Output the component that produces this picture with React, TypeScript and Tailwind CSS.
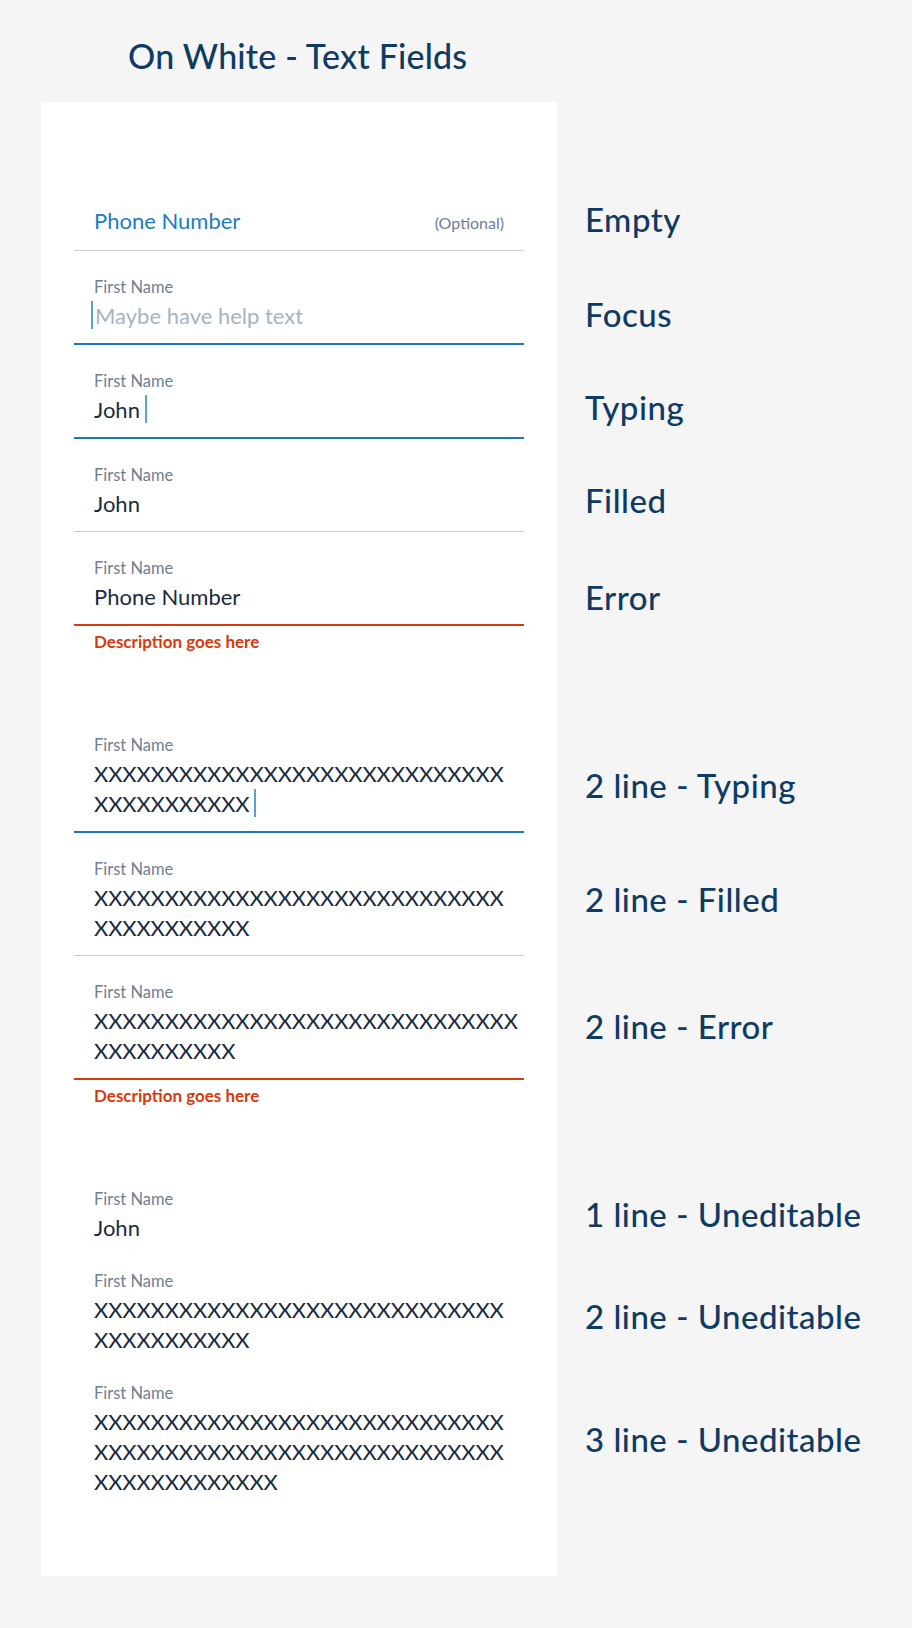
import type { ReactNode } from "react";

const X = (n: number) => "X".repeat(n);

type Variant = "empty" | "focus" | "typing" | "filled" | "error" | "static";

const BORDER: Record<Variant, string> = {
  empty: "border-b border-[#c9cdd2] pb-[12px]",
  focus: "border-b-2 border-[#1a78be] pb-[12px]",
  typing: "border-b-2 border-[#1a78be] pb-[12px]",
  filled: "border-b border-[#c9cdd2] pb-[12px]",
  error: "border-b-2 border-[#d63a0f] pb-[12px]",
  static: "pb-[2px]",
};

function Cursor({ className = "" }: { className?: string }) {
  return <span className={"inline-block h-[28px] w-[2px] bg-[#5a9fd6] align-top " + className} />;
}

function Field({
  variant,
  label = "First Name",
  children,
  description,
}: {
  variant: Variant;
  label?: string;
  children: ReactNode;
  description?: string;
}) {
  return (
    <div>
      <div className={"px-5 pt-[26px] " + BORDER[variant]}>
        <div className="h-5 text-[16.5px] leading-5 text-[#6e7f93]">
          {variant === "empty" ? null : label}
        </div>
        <div className="mt-1 text-[22px] leading-[30px] text-[#1a2b3f]">{children}</div>
      </div>
      {description && (
        <p className="mt-[6px] px-5 text-[17px] leading-5 font-bold text-[#d63a0f]">{description}</p>
      )}
    </div>
  );
}

function Row({ label, labelPad = "", children }: { label?: string; labelPad?: string; children?: ReactNode }) {
  return (
    <div className="flex">
      <div className="w-[516px] shrink-0 bg-white px-[33px]">{children}</div>
      {label && (
        <div className={"pl-[28px] " + labelPad}>
          <span className="block text-[33px] leading-[40px] font-medium tracking-[0.5px] text-[#0e3a63]">
            {label}
          </span>
        </div>
      )}
    </div>
  );
}

function Lines({ lines, last }: { lines: string[]; last?: ReactNode }) {
  return (
    <>
      {lines.map((l, i) => (
        <div key={i} className="tracking-[-0.15px]">
          {l}
          {i === lines.length - 1 ? last : null}
        </div>
      ))}
    </>
  );
}

export default function App() {
  return (
    <div className="min-h-screen bg-[#f5f5f5] font-['Lato',sans-serif]">
      <h1 className="pl-[128px] pt-[36px] text-[34px] leading-[40px] font-medium tracking-[0.2px] text-[#0e3a63]">
        On White - Text Fields
      </h1>

      <div className="mt-[26px] flex flex-col pl-[41px]">
        <Row>
          <div className="h-[54px]" />
        </Row>

        <Row label="Empty" labelPad="pt-[43px]">
          <Field variant="empty">
            <div className="flex items-baseline justify-between">
              <span className="text-[#1b7dc2]">Phone Number</span>
              <span className="text-[16px] text-[#6e7f93]">(Optional)</span>
            </div>
          </Field>
        </Row>

        <Row label="Focus" labelPad="pt-[43px]">
          <Field variant="focus">
            <span className="text-[#a7b3c1]">
              <Cursor className="-ml-[3px] mr-[2px]" />
              Maybe have help text
            </span>
          </Field>
        </Row>

        <Row label="Typing" labelPad="pt-[42px]">
          <Field variant="typing">
            John
            <Cursor className="ml-[5px]" />
          </Field>
        </Row>

        <Row label="Filled" labelPad="pt-[41px]">
          <Field variant="filled">John</Field>
        </Row>

        <Row label="Error" labelPad="pt-[45px]">
          <Field variant="error" description="Description goes here">
            Phone Number
          </Field>
        </Row>

        <Row>
          <div className="h-[57px]" />
        </Row>

        <Row label="2 line - Typing" labelPad="pt-[56px]">
          <Field variant="typing">
            <Lines lines={[X(29), X(11)]} last={<Cursor className="ml-[5px]" />} />
          </Field>
        </Row>

        <Row label="2 line - Filled" labelPad="pt-[46px]">
          <Field variant="filled">
            <Lines lines={[X(29), X(11)]} />
          </Field>
        </Row>

        <Row label="2 line - Error" labelPad="pt-[50px]">
          <Field variant="error" description="Description goes here">
            <Lines lines={[X(30), X(10)]} />
          </Field>
        </Row>

        <Row>
          <div className="h-[57px]" />
        </Row>

        <Row label="1 line - Uneditable" labelPad="pt-[31px]">
          <Field variant="static">John</Field>
        </Row>

        <Row label="2 line - Uneditable" labelPad="pt-[51px]">
          <Field variant="static">
            <Lines lines={[X(29), X(11)]} />
          </Field>
        </Row>

        <Row label="3 line - Uneditable" labelPad="pt-[62px]">
          <Field variant="static">
            <Lines lines={[X(29), X(29), X(13)]} />
          </Field>
        </Row>

        <Row>
          <div className="h-[77px]" />
        </Row>
      </div>
    </div>
  );
}
